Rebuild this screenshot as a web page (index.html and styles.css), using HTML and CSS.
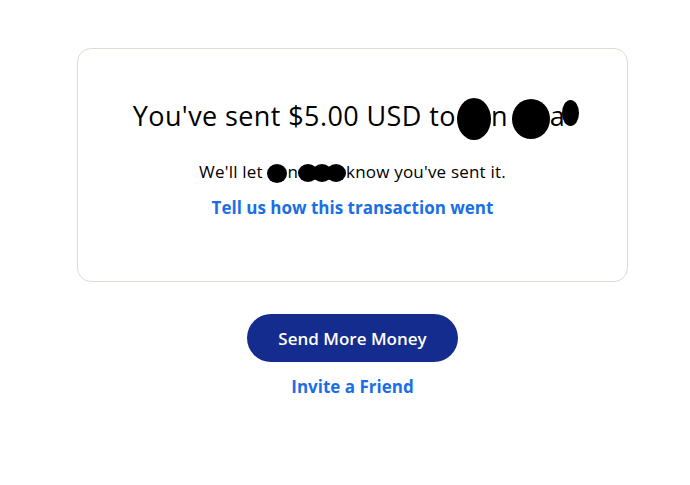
FILE: index.html
```html
<!DOCTYPE html>
<html>
<head>
<meta charset="utf-8">
<link rel="stylesheet" href="styles.css">
</head>
<body>
<main class="page">
  <section class="card">
    <h1 class="title">You've sent $5.00 USD to<span class="blob b1"></span>n<span class="blob b2"></span>a<span class="blob b3"></span></h1>
    <p class="note">We'll let <span class="blob c1"></span>n<span class="blob c2"></span><span class="blob c2 ov"></span><span class="blob c2 ov"></span>know you've sent it.</p>
    <a class="link" href="#">Tell us how this transaction went</a>
  </section>
  <div class="actions">
    <a class="btn" href="#">Send More Money</a>
    <a class="link" href="#">Invite a Friend</a>
  </div>
</main>
</body>
</html>
```
FILE: styles.css
```css
html, body { margin: 0; padding: 0; background: #fff; }
body { font-family: "Open Sans", "Liberation Sans", sans-serif; color: #000; }
.page { width: 551px; margin-left: 77px; padding-top: 48px; }
.card {
  box-sizing: border-box;
  height: 234px;
  border: 1px solid #dedbd3;
  border-radius: 14px;
  display: flex;
  flex-direction: column;
  align-items: center;
  padding-top: 49px;
}
.title { margin: 0 0 0 7px; font-size: 27px; font-weight: 400; line-height: 36px; letter-spacing: 0.4px; white-space: nowrap; }
.note { margin: 26px 0 0; font-size: 17px; line-height: 24px; letter-spacing: 0.2px; white-space: nowrap; }
.link { color: #1a6fe6; font-weight: 700; font-size: 17px; text-decoration: none; line-height: 24px; margin-top: 12px; }
.blob { display: inline-block; background: #000; border-radius: 50%; vertical-align: middle; margin-top: -20px; margin-bottom: -20px; }
.b1 { width: 34px; height: 42px; margin-left: 1px; }
.b2 { width: 38px; height: 40px; margin-left: 4px; }
.b3 { width: 17px; height: 26px; margin: 0 0 0 -3px; vertical-align: baseline; }
.c1 { width: 20px; height: 19px; }
.c2 { width: 20px; height: 18px; }
.c2.ov { margin-left: -6px; }
.actions { display: flex; flex-direction: column; align-items: center; padding-top: 32px; }
.btn {
  box-sizing: border-box;
  width: 211px; height: 48px;
  border-radius: 24px;
  background: #142c8e;
  color: #fff;
  font-size: 17px;
  font-weight: 600;
  text-decoration: none;
  display: flex; align-items: center; justify-content: center;
}
.actions .link { margin-top: 13px; }
```
